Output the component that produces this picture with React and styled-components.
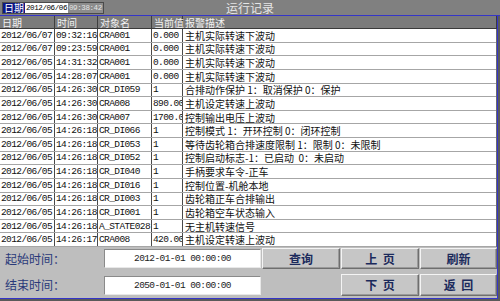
import React from "react";
import styled, { createGlobalStyle } from "styled-components";

const GlobalStyle = createGlobalStyle`
  html, body { margin: 0; padding: 0; background: #5a5a5a; }
  * { box-sizing: border-box; }
`;

const mono = `"Liberation Mono", "DejaVu Sans Mono", monospace`;
const cjk = `"Noto Sans CJK SC", "Noto Sans", sans-serif`;

const Screen = styled.div`
  width: 500px;
  height: 301px;
  overflow: hidden;
  background: #5a5a5a;
  display: flex;
  flex-direction: column;
`;

const TitleBar = styled.div`
  height: 16px;
  background: #808080;
  border-bottom: 1px solid #3535c8;
  display: flex;
  align-items: center;
  position: relative;
`;

const DateBox = styled.div`
  display: flex;
  margin: 1px 0 0 2px;
  height: 12px;
  border: 1px solid #4a4a4a;
`;

const DateTag = styled.span`
  background: #0d1784;
  color: #ffffff;
  font: 10px/10px ${cjk};
  padding: 0 1px;
  display: flex;
  align-items: center;
`;

const DateValue = styled.span`
  background: ${(p) => (p.$dim ? "#8c8c8c" : "#ffffff")};
  color: ${(p) => (p.$dim ? "#e4e4e4" : "#000")};
  font: 7.5px/10px ${mono};
  letter-spacing: -0.4px;
  padding: 0 1px;
  display: flex;
  align-items: center;
`;

const Title = styled.div`
  position: absolute;
  left: 0;
  right: 0;
  top: 0;
  text-align: center;
  color: #e6e6e6;
  font: 12px/15px ${cjk};
  pointer-events: none;
`;

const Main = styled.div`
  display: flex;
  flex: 1;
`;

const Content = styled.div`
  width: 498px;
  height: 283px;
  border-right: 1px solid #3535c8;
  border-bottom: 1px solid #3535c8;
  background: #ffffff;
  display: flex;
  flex-direction: column;
`;

const cols = "55px 43px 54px 31px 1fr";

const HeaderRow = styled.div`
  display: grid;
  grid-template-columns: ${cols};
  height: 13px;
  background: #7b7b7b;
  border-bottom: 1px solid #3a3a3a;
  border-right: 1px solid #3a3a3a;
`;

const HeadCell = styled.div`
  color: #f2f2f2;
  font: 10px/11px ${cjk};
  padding: 0 0 0 2px;
  border-right: 1px solid #3e3e3e;
  white-space: nowrap;
  display: flex;
  align-items: center;
  &:last-child { border-right: none; }
`;

const Rows = styled.div`
  height: 218px;
  display: grid;
  grid-template-rows: repeat(16, 1fr);
  border-right: 1px solid #6a6a6a;
`;

const Row = styled.div`
  display: grid;
  grid-template-columns: ${cols};
  border-bottom: 1px solid #a6a6a6;
  background: #ffffff;
`;

const Cell = styled.div`
  font: ${(p) => (p.$cjk ? `10px/11px ${cjk}` : `9.5px/11px ${mono}`)};
  letter-spacing: ${(p) => (p.$cjk ? "0" : "-0.6px")};
  color: #101010;
  padding-left: ${(p) => (p.$cjk ? "2px" : "1px")};
  border-right: 1px solid #4a4a4a;
  white-space: pre;
  overflow: ${(p) => (p.$cjk ? "visible" : "hidden")};
  display: flex;
  align-items: center;
  &:last-child { border-right: none; }
`;

const Panel = styled.div`
  flex: 1;
  background: #bebebe;
  display: grid;
  grid-template-columns: 100px 157px 78px 78px 77px;
  grid-template-rows: 21px 22px;
  column-gap: 1px;
  row-gap: 5px;
  padding: 1px 0 0 3px;
`;

const Label = styled.div`
  color: #2a3a7a;
  font: 12px/14px ${cjk};
  display: flex;
  align-items: center;
  padding-left: 2px;
`;

const TimeField = styled.div`
  align-self: center;
  height: 19px;
  background: #ffffff;
  border-top: 1px solid #8a8a8a;
  border-left: 1px solid #8a8a8a;
  border-right: 1px solid #e8e8e8;
  border-bottom: 1px solid #e8e8e8;
  color: #222;
  font: 9.5px/17px ${mono};
  letter-spacing: -0.6px;
  text-align: center;
`;

const Button = styled.div`
  grid-column: ${(p) => p.$col};
  background: #c6c6c6;
  border-top: 1px solid #f4f4f4;
  border-left: 1px solid #f4f4f4;
  border-right: 1px solid #6e6e6e;
  border-bottom: 1px solid #6e6e6e;
  box-shadow: inset -1px -1px 0 #9a9a9a;
  color: #1b2a5c;
  font: 700 12px/19px ${cjk};
  text-align: center;
  white-space: pre;
`;

const records = [
  ["2012/06/07", "09:32:16", "CRA001", "0.000", "主机实际转速下波动"],
  ["2012/06/07", "09:23:59", "CRA001", "0.000", "主机实际转速下波动"],
  ["2012/06/05", "14:31:32", "CRA001", "0.000", "主机实际转速下波动"],
  ["2012/06/05", "14:28:07", "CRA001", "0.000", "主机实际转速下波动"],
  ["2012/06/05", "14:26:30", "CR_DI059", "1", "合排动作保护 1：取消保护 0：保护"],
  ["2012/06/05", "14:26:30", "CRA008", "890.00", "主机设定转速上波动"],
  ["2012/06/05", "14:26:30", "CRA007", "1700.0", "控制输出电压上波动"],
  ["2012/06/05", "14:26:18", "CR_DI066", "1", "控制模式 1：开环控制 0：闭环控制"],
  ["2012/06/05", "14:26:18", "CR_DI053", "1", "等待齿轮箱合排速度限制 1：限制 0：未限制"],
  ["2012/06/05", "14:26:18", "CR_DI052", "1", "控制启动标志-1：已启动  0：未启动"],
  ["2012/06/05", "14:26:18", "CR_DI040", "1", "手柄要求车令-正车"],
  ["2012/06/05", "14:26:18", "CR_DI016", "1", "控制位置-机舱本地"],
  ["2012/06/05", "14:26:18", "CR_DI003", "1", "齿轮箱正车合排输出"],
  ["2012/06/05", "14:26:18", "CR_DI001", "1", "齿轮箱空车状态输入"],
  ["2012/06/05", "14:26:18", "A_STATE028", "1", "无主机转速信号"],
  ["2012/06/05", "14:26:17", "CRA008", "420.00", "主机设定转速上波动"],
];

const App = () => {
  return (
    <Screen>
      <GlobalStyle />
      <TitleBar>
        <DateBox>
          <DateTag>日期</DateTag>
          <DateValue>2012/06/06</DateValue>
          <DateValue $dim>09:38:42</DateValue>
        </DateBox>
        <Title>运行记录</Title>
      </TitleBar>
      <Main>
        <Content>
          <HeaderRow>
            <HeadCell>日期</HeadCell>
            <HeadCell>时间</HeadCell>
            <HeadCell>对象名</HeadCell>
            <HeadCell>当前值</HeadCell>
            <HeadCell>报警描述</HeadCell>
          </HeaderRow>
          <Rows>
            {records.map((r, i) => (
              <Row key={i}>
                <Cell>{r[0]}</Cell>
                <Cell>{r[1]}</Cell>
                <Cell>{r[2]}</Cell>
                <Cell>{r[3]}</Cell>
                <Cell $cjk>{r[4]}</Cell>
              </Row>
            ))}
          </Rows>
          <Panel>
            <Label>起始时间：</Label>
            <TimeField>2012-01-01 00:00:00</TimeField>
            <Button $col="3">查询</Button>
            <Button $col="4">{"上  页"}</Button>
            <Button $col="5">刷新</Button>
            <Label>结束时间：</Label>
            <TimeField>2050-01-01 00:00:00</TimeField>
            <Button $col="4">{"下  页"}</Button>
            <Button $col="5">{"返  回"}</Button>
          </Panel>
        </Content>
      </Main>
    </Screen>
  );
};

export default App;
